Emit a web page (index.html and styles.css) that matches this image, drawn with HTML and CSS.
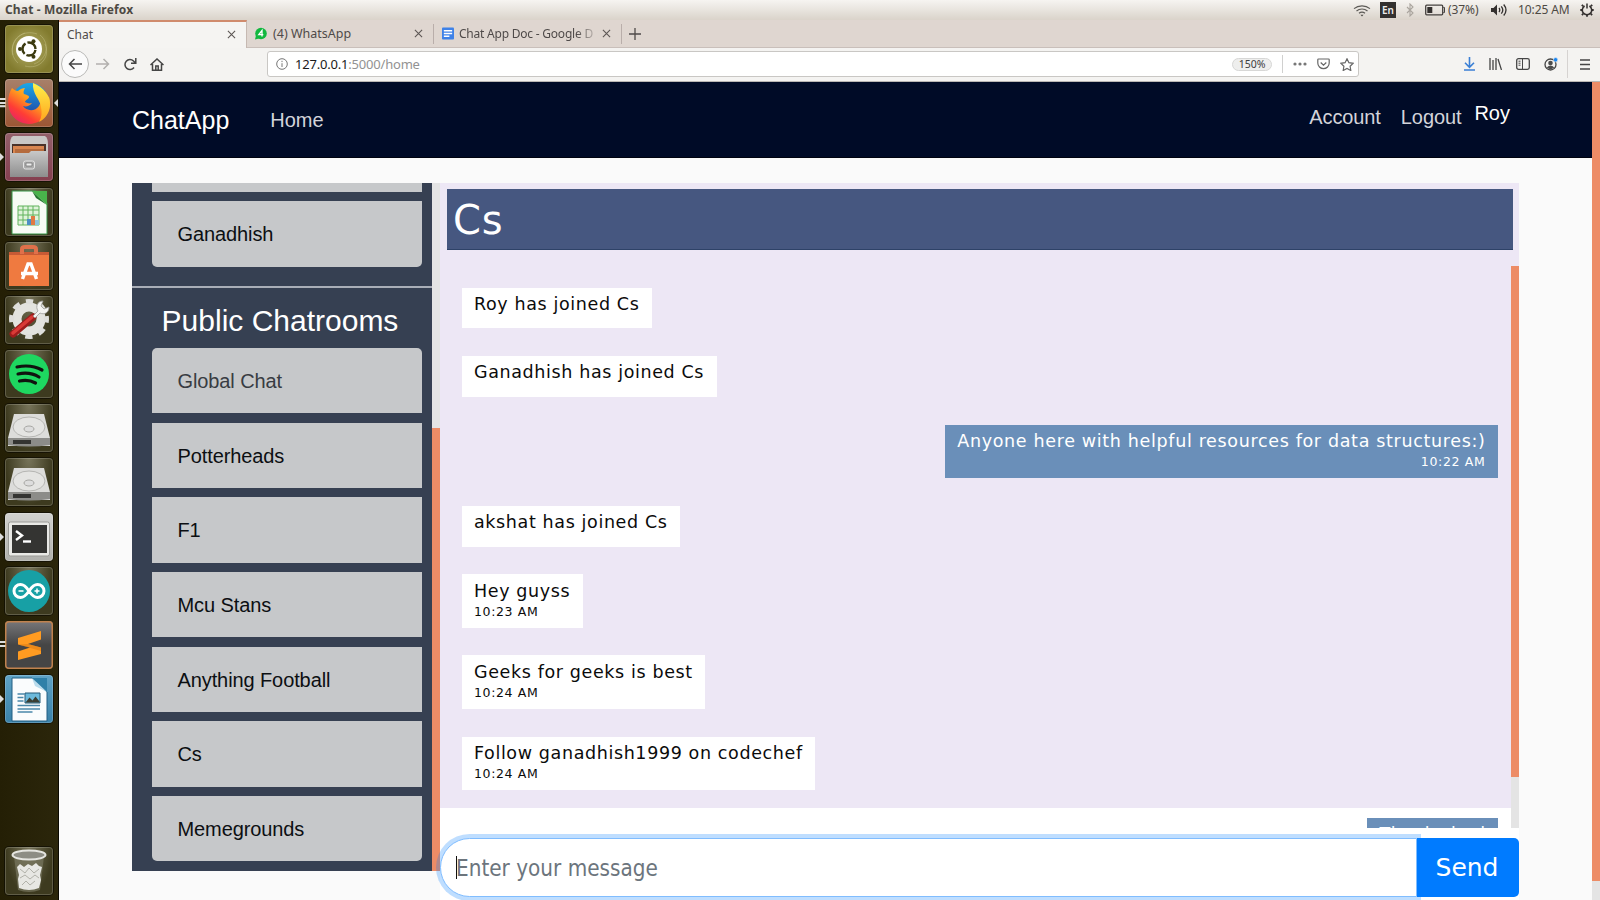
FILE: index.html
```html
<!DOCTYPE html>
<html lang="en">
<head>
<meta charset="utf-8">
<title>Chat</title>
<link rel="stylesheet" href="styles.css">
</head>
<body>
<header class="topbar">
  <span class="topbar-title">Chat - Mozilla Firefox</span>
  <div class="indicators">
    <svg class="ind-wifi" width="18" height="14" viewBox="0 0 18 14" fill="none" stroke="#5c5a56" stroke-width="1.2"><path d="M1 5.600C5.500 2 12.500 2 17 5.600M3.500 8c3.200-2.700 7.800-2.700 11 0M6 10.300c1.800-1.500 4.200-1.500 6 0" /><path d="M7.500 11.800h3L9 13.500z" fill="#4c4a46" stroke="none"/></svg>
    <span class="ind-lang">En</span>
    <svg class="ind-bt" width="8" height="14" viewBox="0 0 8 14" fill="none" stroke="#aaa59e" stroke-width="1.100"><path d="M1 4l6 6-3 3V1l3 3-6 6"/></svg>
    <svg class="ind-bat" width="20" height="12" viewBox="0 0 20 12"><rect x=".7" y="1.200" width="17" height="9.600" rx="1" fill="none" stroke="#45423f" stroke-width="1.300"/><path d="M18.300 3.500h1.200v5h-1.200" fill="none" stroke="#45423f"/><path d="M2.300 3h5v6h-5z" fill="#33302e"/></svg>
    <span class="ind-pct">(37%)</span>
    <svg class="ind-vol" width="18" height="14" viewBox="0 0 18 14"><path d="M1 5h2.500L7 1.500v11L3.500 9H1z" fill="#33302e"/><path d="M9 5q1.500 2 0 4M11.300 3.300q3 3.700 0 7.400M13.700 1.500q4.600 5.500 0 11" fill="none" stroke="#33302e" stroke-width="1.300"/></svg>
    <span class="ind-clock">10:25 AM</span>
    <svg class="ind-gear" width="14" height="14" viewBox="0 0 14 14" fill="none" stroke="#33302e"><path d="M4.600 3A4.700 4.700 0 1 0 9.400 3M7 .5v5" stroke-width="1.500"/><path d="M3.200 3.200 1.800 1.800M10.800 3.200l1.400-1.400M2.300 7H.3M11.700 7h2M3.300 10.700l-1.400 1.400M10.700 10.700l1.400 1.400M7 11.700v2" stroke-width="1.800"/></svg>
  </div>
</header>
<div class="desktop">
<nav class="launcher">
  <div class="tile tile-dash"><svg viewBox="0 0 48 48"><g fill="none" stroke="#c3bf83" stroke-opacity=".5"><path d="M8 30C4 14 18 4 32 9M40 19c6 14-6 26-20 22M13 38C2 28 8 12 20 8M35 10c10 8 8 24-6 29"/></g><circle cx="24" cy="24" r="13" fill="#fff"/><circle cx="24" cy="24" r="6.500" fill="none" stroke="#3b3a10" stroke-width="2.400" stroke-dasharray="11.600 2" stroke-dashoffset="-1"/><g fill="#3b3a10"><circle cx="15" cy="24" r="2"/><circle cx="28.500" cy="16.200" r="2"/><circle cx="28.500" cy="31.800" r="2"/></g></svg></div>
  <div class="tile tile-firefox"><svg viewBox="0 0 48 48"><defs><linearGradient id="ff" x1="1" y1="0" x2=".2" y2="1"><stop offset="0" stop-color="#ffe43a"/><stop offset=".45" stop-color="#ff9a1e"/><stop offset=".75" stop-color="#ff3d35"/><stop offset="1" stop-color="#e7206a"/></linearGradient><linearGradient id="fy" x1="0" y1="0" x2="0" y2="1"><stop offset="0" stop-color="#fff04a"/><stop offset="1" stop-color="#ffa51e"/></linearGradient><linearGradient id="fb" x1="0" y1="0" x2="0" y2="1"><stop offset="0" stop-color="#18a8e8"/><stop offset="1" stop-color="#243c9c"/></linearGradient></defs><circle cx="25" cy="22" r="18" fill="url(#fb)"/><path d="M7 9c2 2 4 3 6 3 2-2 5-3 7-3-1 2-2 4-1 6 2 1 5 1 5 3s-4 3-4 5c2 1 4 2 7 1-2 3-6 4-9 3 3 5 12 6 16 0 3-5 1-10-1-14l11 5a20.500 20.500 0 0 1-40 12C2 20 4 14 7 9z" fill="url(#ff)"/><path d="M28 4c10 4 18 12 17 23-.500 7-5 13-11 16 3-5 3-10 2-15-1-8-9-13-8-24z" fill="url(#fy)"/></svg><span class="pips-left">≡</span><i class="arrow-right"></i></div>
  <div class="tile tile-files"><svg viewBox="0 0 48 48"><defs><linearGradient id="fc" x1="0" y1="0" x2="0" y2="1"><stop offset="0" stop-color="#c8c8c8"/><stop offset="1" stop-color="#8d8d8d"/></linearGradient></defs><path d="M8 3h32q3 2 3 8v33H5V11q0-6 3-8z" fill="#c9c7c5"/><path d="M7 11h34v10H7z" fill="#4b332a"/><path d="M8 13h31v8H8z" fill="#d98650"/><path d="M10 16h29v5H10z" fill="#b56b3d"/><path d="M5 20h19l2-2h17v26H5z" fill="url(#fc)"/><rect x="18.500" y="28" width="11" height="8" rx="2" fill="#aaa" stroke="#e4e4e4"/><path d="M21 30h6v3h-6z" fill="#eee" stroke="#777" stroke-width=".8"/></svg><i class="arrow-left"></i></div>
  <div class="tile"><svg viewBox="0 0 48 48"><path d="M7 3h24l11 12v31H7z" fill="#f7fbf5" stroke="#359447"/><path d="M27 3h15v14z" fill="#49b34b"/><path d="M27 3l4 7 11 7z" fill="#24762f"/><path d="M13 18h21v19H13z" fill="#dff3da"/><path d="M13 18h21v19H13zM13 22h21M13 27h21M13 32h10M18 18v19M23 18v13M28 18v10" fill="none" stroke="#61b35c"/><path d="M22 31h4v6h-4z" fill="#4c8fc4"/><path d="M26 28h4v9h-4z" fill="#e07a43"/><path d="M30 32h4v5h-4z" fill="#8fc5dd"/></svg></div>
  <div class="tile"><svg viewBox="0 0 48 48"><path d="M4 10h40v5H4z" fill="#c75a35"/><path d="M17 12V7q0-2 3-2h8q3 0 3 2v5" fill="none" stroke="#e0704a" stroke-width="4"/><path d="M4 13h40v31H4z" fill="#ef7a40"/><path d="M17.500 37l5.500-15h3l5.500 15M16 31.500h17" fill="none" stroke="#fff" stroke-width="3.400"/></svg></div>
  <div class="tile"><svg viewBox="0 0 48 48"><circle cx="24" cy="23" r="12" fill="none" stroke="#e3e3df" stroke-width="9"/><circle cx="24" cy="23" r="17.500" fill="none" stroke="#dededb" stroke-width="5" stroke-dasharray="7.200 6.540" stroke-dashoffset="3.600"/><path d="M8 38l20-17" stroke="#9d1c1c" stroke-width="7" stroke-linecap="round"/><path d="M8 37l19-16" stroke="#d93a37" stroke-width="3.500" stroke-linecap="round"/><path d="M28 20l5-5c-3-5 0-10 5-10l-2 5 3 3 5-2c0 6-5 8-9 6l-5 5z" fill="#f3f3f1" stroke="#9a9a98" stroke-width=".8"/></svg></div>
  <div class="tile"><svg viewBox="0 0 48 48"><circle cx="24" cy="24" r="20" fill="#1ed760"/><path d="M12 17q14-3 25 3M13 24q12-2.500 21 3M14.500 31q9-2 16 2" fill="none" stroke="#10130f" stroke-width="3.200" stroke-linecap="round"/></svg></div>
  <div class="tile tile-disk"><svg viewBox="0 0 48 48"><path d="M9 10h30l6 24v8H3v-8z" fill="#dcdcda"/><path d="M3 34h42v7q-21 3-42 0z" fill="#8c8c89"/><path d="M8 36h18v4H8z" fill="#343432"/><ellipse cx="24" cy="23" rx="16" ry="10" fill="#e4e4e2" stroke="#b5b5b2"/><ellipse cx="24" cy="25" rx="5" ry="3" fill="#ddd" stroke="#a7a7a4"/></svg></div>
  <div class="tile tile-disk"><svg viewBox="0 0 48 48"><path d="M9 10h30l6 24v8H3v-8z" fill="#dcdcda"/><path d="M3 34h42v7q-21 3-42 0z" fill="#8c8c89"/><path d="M8 36h18v4H8z" fill="#343432"/><ellipse cx="24" cy="23" rx="16" ry="10" fill="#e4e4e2" stroke="#b5b5b2"/><ellipse cx="24" cy="25" rx="5" ry="3" fill="#ddd" stroke="#a7a7a4"/></svg></div>
  <div class="tile tile-term"><svg viewBox="0 0 48 48"><rect x="3.500" y="9" width="41" height="34" rx="2" fill="#e9e9e6" stroke="#9b9b97"/><path d="M7 12h35v28H7z" fill="#343432"/><path d="M11 18l6 4.500-6 4.500" fill="none" stroke="#fff" stroke-width="2.400"/><path d="M18 28.500h8" stroke="#fff" stroke-width="2.400"/></svg><i class="arrow-left"></i></div>
  <div class="tile"><svg viewBox="0 0 48 48"><circle cx="24" cy="24" r="21" fill="#17a0a5"/><path d="M24 24c-4-6-6-6.500-8.500-6.500a6.500 6.500 0 0 0 0 13c2.500 0 4.500-.5 8.500-6.500s6-6.500 8.500-6.500a6.500 6.500 0 0 1 0 13c-2.500 0-4.500-.5-8.500-6.500z" fill="none" stroke="#fff" stroke-width="3"/><path d="M13.500 24h5M29.500 24h5M32 21.500v5" stroke="#fff" stroke-width="1.500"/></svg></div>
  <div class="tile tile-sublime"><svg viewBox="0 0 48 48"><path d="M13 17l23-7v8.500l-13 4.500 13 3.500V33l-23 6v-8.500l12-4-12-3z" fill="#ff9b21"/><path d="M13 23.500l10-.5 13 3.500V30z" fill="#d87812" opacity=".5"/></svg><span class="pips-left">=</span></div>
  <div class="tile tile-writer"><svg viewBox="0 0 48 48"><path d="M7 3h20l15 14v29H7z" fill="#fafcfd" stroke="#235f83"/><path d="M27 3l15 14V3z" fill="#2f80a8"/><path d="M27 3l3 8 12 6z" fill="#b9dced"/><path d="M12.500 19h7M12.500 22.500h6M12.500 26h6M12.500 30.500h22.500M12.500 34h22.500M12.500 37h15" stroke="#4b88aa" stroke-width="1.400"/><path d="M20 18h15v10H20z" fill="#6cb9db" stroke="#245a78"/><path d="M20.500 27.500l4-5 3 3 3-4 4 5v1z" fill="#3a3e33"/></svg><i class="arrow-left"></i></div>
  <div class="tile tile-trash"><svg viewBox="0 0 48 48"><path d="M9 9l4 34q11 4 22 0l4-34z" fill="#77765f" opacity=".7"/><path d="M12 20l3-3 4 3 4-3 4 2 4-3 3 3 3 1-2 8 1 5-2 8q-10 4-20 0l-1-9 1-4z" fill="#e7e7e3"/><path d="M15 22l5 4 4-5 5 5 5-4M15 31l5-3 5 4 5-4 4 3M17 38l4-4 4 4 5-4" fill="none" stroke="#b1b1a9"/><ellipse cx="24" cy="8" rx="16.500" ry="4.500" fill="#8d8d84" stroke="#e5e5e0" stroke-width="2"/></svg></div>
</nav>
<main class="browser">
  <div class="tabs">
    <div class="tab tab-active"><span>Chat</span><svg class="x" viewBox="0 0 10 10"><path d="M1 1l8 8M9 1L1 9"/></svg></div>
    <div class="tab tab-wa"><svg class="fav" viewBox="0 0 12 12"><circle cx="6" cy="6" r="5.800" fill="#12b83f"/><path d="M0 12l1-4 3 3z" fill="#12b83f"/><path d="M7 9V3L3.800 7.200h4.500" fill="none" stroke="#fff" stroke-width="1.300"/></svg><span>(4) WhatsApp</span><svg class="x" viewBox="0 0 10 10"><path d="M1 1l8 8M9 1L1 9"/></svg></div>
    <div class="tab tab-doc"><svg class="fav" viewBox="0 0 13 13"><rect width="13" height="13" rx="1" fill="#3f82e8"/><path d="M2 3.500h9M2 6.500h9M2 9.500h6" stroke="#fff" stroke-width="1.400"/></svg><span class="fade">Chat App Doc - Google D</span><svg class="x" viewBox="0 0 10 10"><path d="M1 1l8 8M9 1L1 9"/></svg></div>
    <svg class="newtab" viewBox="0 0 12 12"><path d="M6 0v12M0 6h12"/></svg>
  </div>
  <div class="toolbar">
    <div class="back"><svg width="14" height="12" viewBox="0 0 14 12"><path d="M14 6H1.500M6.500 1l-5 5 5 5"/></svg></div>
    <svg class="fwd" width="14" height="12" viewBox="0 0 14 12"><path d="M0 6h12.500M7.500 1l5 5-5 5"/></svg>
    <svg class="reload" width="14" height="13" viewBox="0 0 14 13"><path d="M11 9.500A5 5 0 1 1 10.500 3L12.500 5M12.800 0v5.200H8"/></svg>
    <svg class="home" width="14" height="13" viewBox="0 0 14 13"><path d="M.5 7L7 1l6.500 6M2.500 6v6.200h9V6M5.800 12V8h2.400v4"/></svg>
    <div class="urlbar">
      <svg class="info" width="12" height="12" viewBox="0 0 12 12"><circle cx="6" cy="6" r="5.300"/><path d="M6 5.200V9M6 2.800v1.300"/></svg>
      <span class="url"><b>127.0.0.1</b>:5000/home</span>
      <span class="zoom">150%</span>
      <i class="url-sep"></i>
      <svg class="dots" width="14" height="4" viewBox="0 0 14 4"><circle cx="2" cy="2" r="1.600"/><circle cx="7" cy="2" r="1.600"/><circle cx="12" cy="2" r="1.600"/></svg>
      <svg class="pocket" width="13" height="12" viewBox="0 0 13 12"><path d="M1.500 1h10q.7 0 .7.700V5A5.700 5.700 0 0 1 .8 5V1.700Q.8 1 1.500 1zM3.700 4.500L6.500 7.200l2.800-2.700"/></svg>
      <svg class="star" width="14" height="13" viewBox="0 0 14 13"><path d="M7 .8l1.900 3.900 4.300.6-3.100 3 .7 4.200L7 10.500l-3.800 2 .7-4.200-3.100-3 4.300-.6z"/></svg>
    </div>
    <div class="tools">
      <svg width="11" height="14" viewBox="0 0 11 14" stroke="#3a7fd5" stroke-width="1.600"><path d="M5.500 0v10M1 5.800l4.500 4.500L10 5.800M0 13h11"/></svg>
      <svg width="13" height="12" viewBox="0 0 13 12"><path d="M1 0v12M4 2v10M7 0v12M9 1l3.500 11"/></svg>
      <svg width="14" height="12" viewBox="0 0 14 12"><rect x=".7" y=".7" width="12.600" height="10.600" rx="1.800"/><path d="M6.500 1v10M2.500 3.200h2M2.500 5.200h2M2.500 7.200h2" stroke-width="1"/></svg>
      <svg width="14" height="14" viewBox="0 0 14 14"><circle cx="6.500" cy="7.500" r="5.500"/><circle cx="6.500" cy="6" r="2.300" fill="#4c4c4c" stroke="none"/><path d="M2.800 10.500q3.700-4 7.400 0-3.700 3.600-7.400 0z" fill="#4c4c4c" stroke="none"/><circle cx="11.600" cy="2.800" r="2.200" fill="#1a86f0" stroke="#f3f2f0" stroke-width=".6"/></svg>
      <i class="tool-sep"></i>
      <svg width="10" height="11" viewBox="0 0 10 11"><path d="M0 1h10M0 5.500h10M0 10h10"/></svg>
    </div>
  </div>
  <div class="viewport">
    <div class="page">
      <div class="navbar">
        <span class="brand">ChatApp</span><span class="nav-home">Home</span>
        <span class="nav-account">Account</span><span class="nav-logout">Logout</span><span class="nav-user">Roy</span>
      </div>
      <div class="chat">
        <aside class="rooms">
          <div class="room room-cut"></div>
          <div class="room room-last">Ganadhish</div>
          <hr class="divider">
          <h2>Public Chatrooms</h2>
          <div class="room-list">
            <div class="room room-first">Global Chat</div>
            <div class="room">Potterheads</div>
            <div class="room">F1</div>
            <div class="room">Mcu Stans</div>
            <div class="room">Anything Football</div>
            <div class="room">Cs</div>
            <div class="room room-last">Memegrounds</div>
          </div>
        </aside>
        <div class="rooms-scroll"><i></i></div>
        <section class="conversation">
          <div class="conv-body">
            <h1>Cs</h1>
            <div class="messages">
              <div class="msg"><p>Roy has joined Cs</p></div>
              <div class="msg"><p>Ganadhish has joined Cs</p></div>
              <div class="msg mine timed wide"><p>Anyone here with helpful resources for data structures:)</p><time>10:22 AM</time></div>
              <div class="msg"><p>akshat has joined Cs</p></div>
              <div class="msg timed"><p>Hey guyss</p><time>10:23 AM</time></div>
              <div class="msg timed"><p>Geeks for geeks is best</p><time>10:24 AM</time></div>
              <div class="msg timed"><p>Follow ganadhish1999 on codechef</p><time>10:24 AM</time></div>
              <div class="msg mine timed tight"><p>Thanks bud</p></div>
            </div>
            <div class="msg-scroll"><i></i></div>
          </div>
          <div class="composer"><div class="field"><i class="caret"></i>Enter your message</div><div class="send">Send</div></div>
        </section>
      </div>
    </div>
    <div class="page-scroll"><i></i></div>
  </div>
</main>
</div>
</body>
</html>
```
FILE: styles.css
```css
* { box-sizing: border-box; }
body { margin: 0; width: 1600px; height: 900px; overflow: hidden; display: flex; flex-direction: column; font-family: "Liberation Sans", Arial, sans-serif; background: #fafafa; }
svg { display: block; flex: none; }
h1, h2, p, hr { margin: 0; font-weight: 400; }

.topbar { height: 20px; flex: none; display: flex; align-items: center; justify-content: space-between; padding: 0 6px 0 5px; background: linear-gradient(#f6f4f1, #e8e4de 50%, #dad3ca); font-family: "Noto Sans", sans-serif; color: #4d4943; }
.topbar-title { font-size: 12px; font-weight: 700; letter-spacing: .150px; line-height: 20px; }
.indicators { display: flex; align-items: center; font-size: 12px; line-height: 20px; }
.ind-lang { width: 16px; height: 16px; margin-left: 9px; background: #33312f; color: #eee; font-size: 10px; font-weight: 600; line-height: 16px; text-align: center; }
.ind-bt { margin-left: 10px; }
.ind-bat { margin-left: 11px; }
.ind-pct { margin-left: 3px; width: 32px; letter-spacing: -.1px; }
.ind-vol { margin-left: 10px; }
.ind-clock { margin-left: 10px; width: 52px; white-space: nowrap; letter-spacing: -.1px; }
.ind-gear { margin-left: 10px; }

.desktop { flex: 1; display: flex; min-height: 0; }
.launcher { width: 59px; flex: none; display: flex; flex-direction: column; padding: 5px 5px 5px; gap: 6.180px; background: linear-gradient(90deg, #241f05, #2b260b); border-right: 1px solid #0a0902; }
.tile { position: relative; width: 48px; height: 48px; flex: none; border-radius: 4px; background: radial-gradient(ellipse at 50% 0, #77745a, #3d3a1f 70%); box-shadow: inset 0 0 0 1px rgba(255,255,255,.18), 0 0 0 1px rgba(0,0,0,.45); }
.tile svg { width: 48px; height: 48px; }
.tile-dash { background: radial-gradient(circle, #b3ae68, #827b2e 75%); }
.tile-firefox { background: linear-gradient(#a7806a, #9c5634); }
.tile-files { background: linear-gradient(#93606a, #853f4f); }
.tile-term { background: linear-gradient(#d2d2cf, #b0b0ac); }
.tile-sublime { background: linear-gradient(#77777a, #454545 50%); box-shadow: inset 0 0 0 1.500px #c1824e; }
.tile-writer { background: linear-gradient(#5fa3c5, #3a81a8); }
.tile-trash { margin-top: auto; }
.pips-left { position: absolute; left: -12px; top: 13px; font: 700 17px/20px "DejaVu Sans", sans-serif; color: #ddd; }
.arrow-left, .arrow-right { position: absolute; top: 20px; border: 4px solid transparent; }
.arrow-left { left: -5px; border-left-color: #ddd; border-right: 0; }
.arrow-right { right: -5px; border-right-color: #ddd; border-left: 0; }

.browser { flex: 1; display: flex; flex-direction: column; min-width: 0; }
.tabs { height: 28px; flex: none; display: flex; align-items: center; background: #dfd6d0; border-bottom: 1px solid #c9bfba; font: 12.500px/26px "Noto Sans", sans-serif; color: #4f4a49; }
.tab { height: 28px; display: flex; align-items: center; padding: 0 10px 0 8px; width: 187px; white-space: nowrap; }
.tab span { flex: 1; margin-right: 8px; overflow: hidden; }
.tab-active { width: 188px; background: #f5f4f2; border-top: 2px solid #d08b6d; border-right: 1px solid #c6b9b2; }
.tab-wa { width: 186px; }
.tab-active span { font-size: 12px; }
.fav { width: 12px; height: 13px; margin-right: 6px; }
.tab-doc { border-left: 1px solid #b9aeaa; height: 20px; border-right: 1px solid #b9aeaa; width: 189px; letter-spacing: -.220px; font-size: 12px; }
.tab-doc span { margin-right: 5px; margin-left: -1px; line-height: 20px; }
.fade { -webkit-mask-image: linear-gradient(90deg, #000 85%, transparent 102%); mask-image: linear-gradient(90deg, #000 85%, transparent 102%); }
.x { width: 9px; height: 9px; fill: none; stroke: #5c5654; stroke-width: 1.200; }
.newtab { width: 12px; height: 12px; margin-left: 7px; stroke: #4f4a49; stroke-width: 1.300; }

.toolbar { height: 34px; flex: none; display: flex; align-items: center; background: #f4f3f1; border-bottom: 1px solid #bbb8b5; padding: 0 10px 1px 2px; fill: none; stroke: #454545; stroke-width: 1.500; }
.back { width: 28px; height: 28px; border: 1px solid #b9b9b7; border-radius: 50%; background: #fbfbfb; display: grid; place-items: center; }
.fwd { margin-left: 7px; stroke: #b2b0ae; }
.reload { margin-left: 13px; }
.home { margin-left: 13px; }
.urlbar { margin-left: 103px; width: 1092px; height: 26px; display: flex; align-items: center; background: #fff; border: 1px solid #c9c7c4; border-radius: 3px; padding: 0 4px 0 8px; stroke: #666; stroke-width: 1.200; }
.info { stroke: #777; stroke-width: 1; }
.url { flex: 1; margin-left: 7px; font: 13px/24px "Noto Sans", sans-serif; color: #929292; letter-spacing: -.2px; }
.url b { font-weight: 400; color: #1b1b1b; }
.zoom { width: 40px; height: 13px; border-radius: 7px; background: #eeeeed; border: 1px solid #d7d7d6; font: 10.500px/11px "Noto Sans", sans-serif; color: #3d3d3d; text-align: center; }
.url-sep { width: 1px; height: 18px; background: #d0d0cf; margin: 0 10px; }
.dots { fill: #777; stroke: none; }
.pocket { margin-left: 10px; }
.star { margin-left: 10px; }
.tools { flex: 1; display: flex; align-items: center; justify-content: flex-end; gap: 14px; stroke-width: 1.300; }
.tool-sep { width: 1px; height: 28px; background: #d6d3d1; margin-left: -5px; margin-right: -2px; }

.viewport { flex: 1; display: flex; min-height: 0; }
.page { flex: 1; display: flex; flex-direction: column; background: #fafafa; min-width: 0; }
.page-scroll { width: 8px; background: #e4e4e4; }
.page-scroll i { display: block; height: 799px; background: #ed8c66; }
.navbar { height: 76px; flex: none; display: flex; align-items: center; padding: 0 82px 0 73px; background: #000b27; border-bottom: 1px solid #00030f; font-size: 20px; line-height: 24px; color: #d3d4da; }
.brand { font-size: 25px; color: #fff; }
.nav-home { margin-left: 41px; flex: 1; }
.nav-account { margin-right: 20px; margin-bottom: 5px; letter-spacing: -.1px; }
.nav-logout { margin-right: 13px; margin-bottom: 5px; letter-spacing: -.1px; }
.nav-user { color: #fff; margin-bottom: 13px; }

.chat { margin: 25px 0 0 73px; width: 1387px; height: 717px; display: flex; align-items: flex-start; }
.rooms { width: 300px; height: 688px; padding: 0 10px 0 20px; background: #364052; display: flex; flex-direction: column; overflow: hidden; }
.room { height: 65.400px; flex: none; padding-left: 25.500px; line-height: 66px; font-size: 20px; letter-spacing: -.1px; color: #0c0f12; background: #c6c8ca; }
.room-cut { height: 9px; margin-bottom: 9.400px; }
.room-first { border-radius: 5px 5px 0 0; color: #383c42; }
.room-last { border-radius: 0 0 5px 5px; }
.divider { flex: none; margin: 19.200px -10px 0 -20px; border: 0; height: 2px; background: #a9aeb7; }
.rooms h2 { height: 60px; flex: none; text-align: center; font-size: 30px; line-height: 65px; color: #fff; margin-left: -14px; }
.room-list { display: flex; flex-direction: column; gap: 9.270px; }
.rooms-scroll { width: 8px; height: 688px; background: #e4e4e4; padding-top: 245px; }
.rooms-scroll i { display: block; height: 443px; background: #ed8c66; }
.conversation { width: 1079px; height: 717px; background: #fff; display: flex; flex-direction: column; }
.conv-body { height: 645px; flex: none; display: grid; grid-template: 83px 562px / 1071px 8px; background: linear-gradient(#ede7f5 625px, #fff 625px); font-family: "DejaVu Sans", sans-serif; overflow: hidden; }
h1 { grid-column: 1 / 3; margin: 6px 6px 16px 7px; padding-left: 6px; background: #465780; border-bottom: 1px solid #2e4268; font-size: 40px; line-height: 62px; letter-spacing: .800px; color: #fff; }
.messages { overflow: hidden; display: flex; flex-direction: column; align-items: flex-start; gap: 27.800px; padding: 21.500px 13px 0 21.500px; letter-spacing: .625px; color: #0b0b0b; font-size: 17.500px; line-height: 20px; }
.msg { flex: none; height: 40.800px; padding: 6.200px 12.500px 0; background: #fff; white-space: nowrap; }
.timed { height: 53.300px; }
.mine { align-self: flex-end; background: #6a8fb9; color: #fff; text-align: right; }
.wide { letter-spacing: .665px; }
.tight { letter-spacing: .425px; }
.msg time { display: block; margin-top: 1.400px; font-size: 12.500px; }
.msg-scroll { background: #e4e4e4; }
.msg-scroll i { display: block; height: 511px; background: #ed8c66; }
.composer { margin-top: 10px; height: 59px; display: flex; position: relative; }
.field { width: 977px; height: 59px; display: flex; align-items: center; padding-left: 15px; border: 1px solid #80bdff; border-radius: 30px 0 0 30px; background: #fff; box-shadow: 0 0 0 4px rgba(0,123,255,.25); font: 22.300px/30px "DejaVu Sans Condensed", "DejaVu Sans", sans-serif; font-stretch: condensed; color: #6c757d; }
.caret { width: 1px; height: 23px; background: #111; margin-right: -1px; }
.send { flex: 1; border-radius: 0 5px 5px 0; background: #007bff; color: #fff; text-align: center; padding-right: 2px; font: 25px/60px "DejaVu Sans", sans-serif; }
```
